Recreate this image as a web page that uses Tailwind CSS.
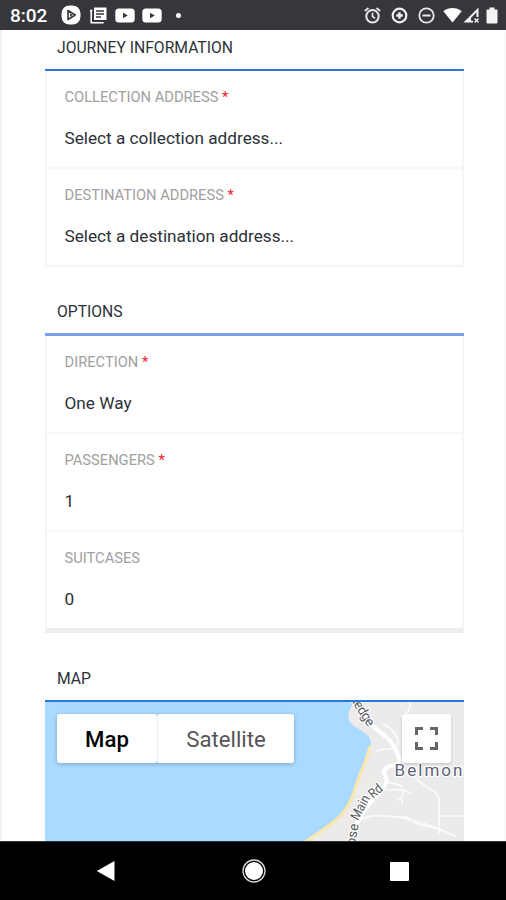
<!DOCTYPE html>
<html lang="en">
<head>
<meta charset="utf-8">
<title>Journey booking</title>
<script src="https://cdn.jsdelivr.net/npm/@tailwindcss/browser@4"></script>
</head>
<body class="bg-white">
<div class="flex h-[900px] w-[506px] flex-col overflow-hidden font-['Roboto',sans-serif]">
  <header class="flex h-[30px] shrink-0 items-center bg-[#36373c] pl-[10px] pr-[8px] text-white">
    <span class="w-[51px] pt-[2px] text-[19px] leading-[30px] font-medium whitespace-nowrap">8:02</span>
    <svg class="h-[20px] w-[20px]" viewBox="0 0 20 20"><rect x=".5" y=".5" width="19" height="19" rx="8" fill="#fff"/><path d="M7 5.5v9l7.2-4.5z" fill="#fff" stroke="#36373c" stroke-width="1.6" stroke-linejoin="round"/><path d="M9 8.3v3.4l2.7-1.7z" fill="#36373c"/></svg>
    <svg class="ml-[9px] h-[17px] w-[17px]" viewBox="0 0 17 17"><path d="M4 .5h12.5v12.5H4z" fill="#fff"/><path d="M1.2 3.5v12.3h12.5M0 3.5h2.5" fill="none" stroke="#fff" stroke-width="1.6"/><path d="M6 4h8M6 7h8M6 10h5" stroke="#36373c" stroke-width="1.3"/></svg>
    <svg class="ml-[8px] h-[15px] w-[20px]" viewBox="0 0 20 15"><rect x=".3" y=".5" width="19.4" height="14" rx="3.5" fill="#fff"/><path d="M8 4.7v5.6l4.8-2.8z" fill="#36373c"/></svg>
    <svg class="ml-[7px] h-[15px] w-[20px]" viewBox="0 0 20 15"><rect x=".3" y=".5" width="19.4" height="14" rx="3.5" fill="#fff"/><path d="M8 4.7v5.6l4.8-2.8z" fill="#36373c"/></svg>
    <span class="ml-[14px] h-[5px] w-[5px] rounded-full bg-white"></span>
    <svg class="ml-auto h-[17px] w-[17px]" viewBox="0 0 17 17" fill="none" stroke="#e8e8e8"><circle cx="8.5" cy="9.3" r="6.2" stroke-width="2"/><path d="M8.5 5.8v3.8l2.6 1.6" stroke-width="1.6"/><path d="M.8 4 4.5 1M16.2 4 12.5 1" stroke-width="1.8"/></svg>
    <svg class="ml-[10px] h-[17px] w-[17px]" viewBox="0 0 17 17" fill="none" stroke="#f2f2f2"><circle cx="8.5" cy="8.5" r="6.8" stroke-width="2.200"/><path d="M8.5 5.200v6.600M5.200 8.500h6.600" stroke-width="2.400"/></svg>
    <svg class="ml-[10px] h-[17px] w-[17px]" viewBox="0 0 17 17" fill="none" stroke="#e8e8e8"><circle cx="8.5" cy="8.5" r="7.2" stroke-width="1.8"/><path d="M4.5 8.5h8" stroke-width="2"/></svg>
    <svg class="ml-[8px] h-[16px] w-[19px]" viewBox="0 0 19 16"><path d="M.3 4.2C5.600-.2 13.400-.2 18.700 4.200L9.500 15.500z" fill="#fff"/></svg>
    <svg class="ml-[1px] h-[16px] w-[16px]" viewBox="0 0 16 16"><path d="M.5 15.500 15.500.5V10h-2V5.300L5.300 13.800H10v1.700zM8 9.500v6H1.500z" fill="#f2f2f2"/><path d="m11.500 11.500 4 4m0-4-4 4" stroke="#f2f2f2" stroke-width="1.400"/></svg>
    <svg class="ml-[7px] h-[17px] w-[12px]" viewBox="0 0 12 17"><path d="M3.500.5h5v2h2q1 0 1 1v12q0 1-1 1h-9q-1 0-1-1v-12q0-1 1-1h2z" fill="#f4f4f4"/></svg>
  </header>

  <main class="flex h-[811px] shrink-0 flex-col overflow-hidden border-x-2 border-l-[#f2f2f2] border-r-[#fafafa] pl-[43px] pr-[40px] text-[#2c3138]">
    <h2 class="h-[39px] shrink-0 pl-[12px] text-[15.700px] leading-[36px]">JOURNEY INFORMATION</h2>
    <section class="mb-[27px] h-[198px] shrink-0 border-x-2 border-b-2 border-[#f5f5f5]">
      <div class="-mx-[2px] h-[2px] bg-[#2f76d8]"></div>
      <div class="h-[98px] border-b-2 border-[#f7f7f7] pl-[17.500px] pt-[16px]">
        <div class="text-[14.700px] leading-[20px] text-[#a0a0a0]">COLLECTION ADDRESS <span class="text-[#f5222d]">*</span></div>
        <div class="mt-[19px] text-[17.200px] leading-[24px]">Select a collection address...</div>
      </div>
      <div class="h-[96px] pl-[17.500px] pt-[16px]">
        <div class="text-[14.700px] leading-[20px] text-[#a0a0a0]">DESTINATION ADDRESS <span class="text-[#f5222d]">*</span></div>
        <div class="mt-[19px] text-[17.200px] leading-[24px]">Select a destination address...</div>
      </div>
    </section>

    <h2 class="h-[39px] shrink-0 pl-[12px] text-[15.700px] leading-[36px]">OPTIONS</h2>
    <section class="mb-[28px] h-[300px] shrink-0 border-x-2 border-b-[5px] border-[#f5f5f5] border-b-[#ededed]">
      <div class="-mx-[2px] h-[3px] bg-[#7aa0e8]"></div>
      <div class="h-[98px] border-b-2 border-[#f7f7f7] pl-[17.500px] pt-[16px]">
        <div class="text-[14.700px] leading-[20px] text-[#a0a0a0]">DIRECTION <span class="text-[#f5222d]">*</span></div>
        <div class="mt-[19px] text-[17.200px] leading-[24px]">One Way</div>
      </div>
      <div class="h-[98px] border-b-2 border-[#f7f7f7] pl-[17.500px] pt-[16px]">
        <div class="text-[14.700px] leading-[20px] text-[#a0a0a0]">PASSENGERS <span class="text-[#f5222d]">*</span></div>
        <div class="mt-[19px] text-[17.200px] leading-[24px]">1</div>
      </div>
      <div class="h-[96px] pl-[17.500px] pt-[16px]">
        <div class="text-[14.700px] leading-[20px] text-[#a0a0a0]">SUITCASES</div>
        <div class="mt-[19px] text-[17.200px] leading-[24px]">0</div>
      </div>
    </section>

    <h2 class="h-[39px] shrink-0 pl-[12px] text-[15.700px] leading-[36px]">MAP</h2>
    <div class="h-[2px] shrink-0 bg-[#2878e0]"></div>
    <section class="relative h-[140px] shrink-0 overflow-hidden bg-[#aadaff]">
      <svg class="absolute inset-0 h-[140px] w-[419px]" viewBox="45 702 419 140">
        <path d="M355 702C350 707 347 714 349 720C352 728 371 732 371 743C370 755 362 770 356 786C350 804 346 812 335 821C322 831 313 837 303 842H464V702z" fill="#ecebe9"/>
        <path d="M370 746C367 760 359 775 355 789C350 804 345 813 335 821C322 831 313 837 305 842" fill="none" stroke="#f8e8ad" stroke-width="3"/>
        <g fill="none" stroke="#fff" stroke-linecap="round" stroke-linejoin="round">
          <path d="M356 704C364 718 372 727 385 736C397 745 399 757 400 764C392 766 383 766 384 773C390 780 385 787 376 796C361 812 354 827 351 842" stroke-width="4"/>
          <path d="M384 725C394 729 398 736 398 745M377 751C384 748 389 750 394 748M410 702Q411 713 401 716M385 783C397 782 404 787 402 787M386 790C397 790 406 788 411 794M403 790Q403 800 398 800M402 800V804M362 819C378 812 390 818 407 817C417 827 430 825 443 831M401 818C424 821 444 831 455 836M414 776C424 790 439 788 439 801V833M439 816H463" stroke-width="1.700" opacity=".8"/>
        </g>
        <g fill="#555960" stroke="#fff" stroke-width="2.500" stroke-linejoin="round" paint-order="stroke" font-family="Roboto, sans-serif">
          <text x="352" y="702" font-size="13.500" textLength="30" transform="rotate(58 352 702)">ledge</text>
          <text x="355" y="846" font-size="13.500" transform="rotate(-80 355 846)">ose</text>
          <text x="358" y="821" font-size="13.500" textLength="26" lengthAdjust="spacingAndGlyphs" transform="rotate(-62 358 821)">Main</text>
          <text x="373" y="799" font-size="13.500" textLength="14" lengthAdjust="spacingAndGlyphs" transform="rotate(-40 373 799)">Rd</text>
          <text x="394.500" y="776" font-size="17" textLength="68" fill="#5c6278">Belmon</text>
        </g>
      </svg>
      <div class="absolute left-[12px] top-[12px] flex h-[49px] w-[237px] rounded-[3px] text-[22.200px] leading-[50px] shadow-[0_1px_4px_rgba(0,0,0,.25)]">
        <button class="w-[100px] rounded-[3px] bg-white font-medium text-black">Map</button>
        <button class="w-[137px] rounded-[3px] border-l border-[#e8edf0] bg-white text-[#565656]">Satellite</button>
      </div>
      <button class="absolute left-[357px] top-[12px] flex h-[49px] w-[49px] items-center justify-center rounded-[3px] bg-white shadow-[0_1px_3px_rgba(0,0,0,.18)]" aria-label="Full screen">
        <svg class="h-[23px] w-[23px]" viewBox="0 0 23 23"><path d="M1.500 8V1.500H8M15 1.500h6.500V8M21.500 15v6.500H15M8 21.500H1.500V15" fill="none" stroke="#666" stroke-width="3"/></svg>
      </button>
    </section>
  </main>

  <nav class="flex h-[59px] shrink-0 items-center border-t border-[#333] bg-black pl-[96px] pr-[97px]">
    <svg class="h-[22px] w-[19px]" viewBox="0 0 19 22"><path d="M18.500 1v20L.8 11z" fill="#fff"/></svg>
    <svg class="ml-[127px] h-[24px] w-[24px]" viewBox="0 0 24 24"><circle cx="12" cy="12" r="9" fill="#fff"/><circle cx="12" cy="12" r="11" fill="none" stroke="#ddd" stroke-width="1.300"/></svg>
    <span class="ml-auto h-[19px] w-[19px] rounded-[1px] bg-white"></span>
  </nav>
</div>
</body>
</html>
